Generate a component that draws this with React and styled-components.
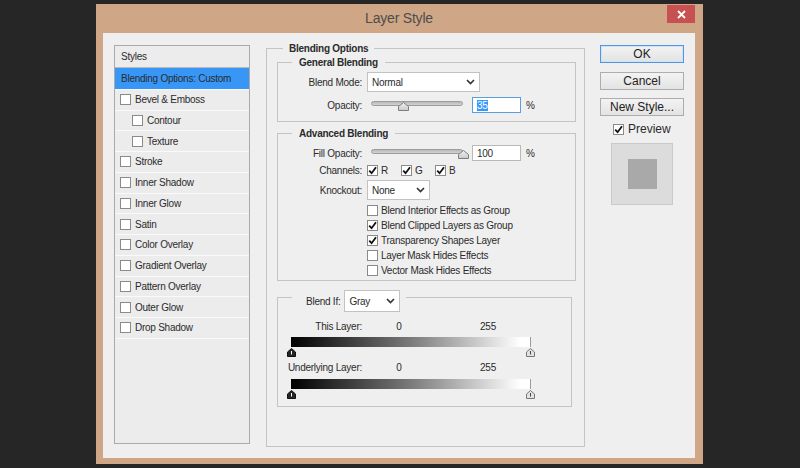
import styled, { createGlobalStyle } from 'styled-components'

const styleItems = [
  { id: 1, name: 'Bevel & Emboss' },
  { id: 2, name: 'Contour', indent: true },
  { id: 3, name: 'Texture', indent: true },
  { id: 4, name: 'Stroke' },
  { id: 5, name: 'Inner Shadow' },
  { id: 6, name: 'Inner Glow' },
  { id: 7, name: 'Satin' },
  { id: 8, name: 'Color Overlay' },
  { id: 9, name: 'Gradient Overlay' },
  { id: 10, name: 'Pattern Overlay' },
  { id: 11, name: 'Outer Glow' },
  { id: 12, name: 'Drop Shadow' },
]

const advancedChecks = [
  { name: 'Blend Interior Effects as Group', checked: false },
  { name: 'Blend Clipped Layers as Group', checked: true },
  { name: 'Transparency Shapes Layer', checked: true },
  { name: 'Layer Mask Hides Effects', checked: false },
  { name: 'Vector Mask Hides Effects', checked: false },
]

const GlobalStyle = createGlobalStyle`
  html, body {
    margin: 0;
    padding: 0;
    background: #262626;
  }
  body {
    font-family: 'Liberation Sans', Arial, sans-serif;
    font-size: 10px;
    letter-spacing: -0.25px;
    color: #2b2b2b;
  }
  * {
    box-sizing: border-box;
  }
`

const Window = styled.div`
  width: 607px;
  height: 460px;
  margin: 4px 0 0 96px;
  background: #cfa786;
  display: flex;
  flex-direction: column;
  padding: 0 8px 6px 7px;
`

const TitleBar = styled.div`
  height: 29px;
  display: grid;
  grid-template-columns: 1fr auto 1fr;
  align-items: center;
`

const Title = styled.div`
  grid-column: 2;
  font-size: 14px;
  letter-spacing: -0.2px;
  color: #4d4d4d;
  padding-bottom: 1px;
`

const CloseButton = styled.div`
  justify-self: end;
  align-self: start;
  margin-top: 1px;
  width: 28px;
  height: 18px;
  background: #c75050;
  display: flex;
  align-items: center;
  justify-content: center;
`

const Client = styled.div`
  flex: 1;
  background: #efefef;
  display: flex;
  align-items: flex-start;
  padding: 12px 11px 0;
`

const StylesPanel = styled.div`
  width: 136px;
  height: 399px;
  border: 1px solid #aaaaaa;
  background: #ececec;
`

const StylesHeader = styled.div`
  height: 22px;
  border-bottom: 1px solid #b9b9b9;
  padding-left: 6px;
  display: flex;
  align-items: center;
`

const StyleRow = styled.div`
  height: ${({ $active }) => ($active ? 21.75 : 20.75)}px;
  border-bottom: 1px solid #fafafa;
  display: flex;
  align-items: center;
  gap: 4px;
  padding-left: ${({ $indent, $active }) => ($active ? 6 : $indent ? 17 : 5)}px;
  background: ${({ $active }) => ($active ? '#3897f6' : 'transparent')};
  white-space: nowrap;
`

const Box = styled.span`
  flex: none;
  width: 11px;
  height: 11px;
  border: 1px solid #8a8a8a;
  background: #ffffff;
  display: flex;
  align-items: center;
  justify-content: center;
`

const OptionsGroup = styled.fieldset`
  flex: none;
  width: 319px;
  height: 405px;
  margin: -3px 0 0 16px;
  padding: 1px 8px 0 10px;
  border: 1px solid #c4c4c4;
  min-width: 0;
`

const GroupLegend = styled.legend`
  margin-left: 6px;
  padding: 0 6px;
  font-weight: bold;
  line-height: 13px;
`

const Section = styled.fieldset`
  margin: ${({ $top }) => $top}px ${({ $right }) => $right || 0}px 0 0;
  padding: ${({ $padTop }) => $padTop}px 0 ${({ $padBottom }) => $padBottom}px 0;
  border: 1px solid #c4c4c4;
  min-width: 0;
`

const SectionLegend = styled.legend`
  margin-left: 14px;
  padding: 0 7px;
  font-weight: bold;
  line-height: 13px;
`

const BlendIfLegend = styled.legend`
  margin-left: 14px;
  padding: 8px 6px 0 14px;
`

const LegendInner = styled.span`
  display: flex;
  align-items: center;
  gap: 4px;
`

const FieldRow = styled.div`
  display: grid;
  grid-template-columns: 84px auto;
  column-gap: 5px;
  align-items: center;
  margin-top: ${({ $top }) => $top || 0}px;
  height: ${({ $height }) => $height}px;
`

const Label = styled.span`
  text-align: right;
  white-space: nowrap;
`

const SelectBox = styled.div`
  width: ${({ $width }) => $width}px;
  height: ${({ $height }) => $height || 20}px;
  background: #ffffff;
  border: 1px solid #c2c2c2;
  display: flex;
  align-items: center;
  justify-content: space-between;
  padding: 0 4px 0 4px;
`

const Controls = styled.div`
  display: flex;
  align-items: center;
`

const Slider = styled.div`
  position: relative;
  width: 96px;
  height: 16px;
  padding: 4px 0 0 4px;
`

const Track = styled.div`
  width: 92px;
  height: 5px;
  border: 1px solid #9c9c9c;
  border-radius: 3px;
  background: linear-gradient(#b9b9b9, #d2d2d2);
`

const Thumb = styled.svg`
  position: absolute;
  top: 5px;
`

const NumberField = styled.div`
  width: 49px;
  height: 16px;
  margin-left: 9px;
  background: #ffffff;
  border: 1px solid ${({ $focused }) => ($focused ? '#5a9de0' : '#b9b9b9')};
  padding-left: 4px;
  display: flex;
  align-items: center;
`

const Selected = styled.span`
  background: #3399ff;
  color: #ffffff;
`

const Percent = styled.span`
  margin-left: 5px;
`

const Channels = styled.div`
  display: flex;
`

const ChannelItem = styled.label`
  width: 34px;
  display: flex;
  align-items: center;
  gap: 3px;
`

const CheckList = styled.div`
  margin-top: 3px;
  padding-left: 89px;
`

const CheckRow = styled.label`
  height: 15px;
  display: flex;
  align-items: center;
  gap: 3px;
  white-space: nowrap;
`

const ValueRow = styled.div`
  display: grid;
  grid-template-columns: 84px 64px 104px;
  column-gap: 5px;
  align-items: center;
  height: 13px;
  margin-top: ${({ $top }) => $top}px;
`

const Value = styled.span`
  text-align: center;
`

const GradientBar = styled.div`
  width: 240px;
  height: 10px;
  margin: ${({ $top }) => $top}px 0 0 13px;
  background: linear-gradient(to right, #000000, #7a7a7a 50%, #ffffff 96%);
  border-right: 1px solid #9a9a9a;
`

const Pointers = styled.div`
  width: 248px;
  height: 9px;
  margin: 1px 0 0 9px;
  display: flex;
  justify-content: space-between;
`

const ButtonColumn = styled.div`
  width: 84px;
  margin-left: 15px;
  display: flex;
  flex-direction: column;
`

const Button = styled.div`
  height: 18px;
  margin-bottom: 8.5px;
  border: 1px solid ${({ $primary }) => ($primary ? '#4f97e3' : '#adadad')};
  box-shadow: ${({ $primary }) => ($primary ? 'inset 0 0 0 1px #cfe3f8' : 'none')};
  background: linear-gradient(#f3f3f3, #e3e3e3);
  font-size: 12px;
  letter-spacing: 0;
  color: #222222;
  display: flex;
  align-items: center;
  justify-content: center;
`

const PreviewToggle = styled.label`
  height: 13px;
  margin-top: -2px;
  padding-left: 13px;
  display: flex;
  align-items: center;
  gap: 4px;
  font-size: 12px;
  letter-spacing: 0;
`

const Swatch = styled.div`
  width: 62px;
  height: 62px;
  margin: 7px 0 0 11px;
  background: #dcdcdc;
  border: 1px solid #c9c9c9;
  display: flex;
  align-items: center;
  justify-content: center;
`

const SwatchInner = styled.div`
  width: 29px;
  height: 30px;
  background: #a9a9a9;
`

const Check = ({ checked }) => (
  <Box>
    {checked && (
      <svg width="9" height="9" viewBox="0 0 9 9">
        <path d="M1.2 4.6 L3.6 7.2 L8 1.2" fill="none" stroke="#111" strokeWidth="1.8" />
      </svg>
    )}
  </Box>
)

const Chevron = () => (
  <svg width="9" height="6" viewBox="0 0 9 6">
    <polyline points="1,1 4.5,4.6 8,1" fill="none" stroke="#333" strokeWidth="1.6" />
  </svg>
)

const Select = ({ value, width, height }) => (
  <SelectBox $width={width} $height={height}>
    <span>{value}</span>
    <Chevron />
  </SelectBox>
)

const OpacitySlider = ({ value }) => (
  <Slider>
    <Track />
    <Thumb width="11" height="9" viewBox="0 0 11 9" style={{ left: 4 + (value / 100) * 92 - 5.5 }}>
      <defs>
        <linearGradient id="thumbFill" x1="0" y1="0" x2="0" y2="1">
          <stop offset="0" stopColor="#f2f2f2" />
          <stop offset="1" stopColor="#c9c9c9" />
        </linearGradient>
      </defs>
      <path d="M5.5 0.5 L10.5 4.5 V8.5 H0.5 V4.5 Z" fill="url(#thumbFill)" stroke="#7d7d7d" />
    </Thumb>
  </Slider>
)

const Pointer = ({ dark }) => (
  <svg width="9" height="9" viewBox="0 0 9 9">
    <path
      d="M4.5 0.5 L8.5 4 V8.5 H0.5 V4 Z"
      fill={dark ? '#262626' : '#e2e2e2'}
      stroke={dark ? '#111' : '#777'}
    />
    <line x1="4.5" y1="3" x2="4.5" y2="6.5" stroke={dark ? '#fff' : '#444'} strokeWidth="1" />
  </svg>
)

const LayerRange = ({ label, top, barTop }) => (
  <>
    <ValueRow $top={top}>
      <Label>{label}</Label>
      <Value>0</Value>
      <Value>255</Value>
    </ValueRow>
    <GradientBar $top={barTop} />
    <Pointers>
      <Pointer dark />
      <Pointer />
    </Pointers>
  </>
)

const App = () => {
  return (
    <>
      <GlobalStyle />
      <Window>
        <TitleBar>
          <Title>Layer Style</Title>
          <CloseButton>
            <svg width="9" height="9" viewBox="0 0 9 9">
              <path d="M1 1 L8 8 M8 1 L1 8" stroke="#fff" strokeWidth="1.8" />
            </svg>
          </CloseButton>
        </TitleBar>
        <Client>
          <StylesPanel>
            <StylesHeader>Styles</StylesHeader>
            <StyleRow $active>Blending Options: Custom</StyleRow>
            {styleItems.map(item => (
              <StyleRow key={item.id} $indent={item.indent}>
                <Check />
                {item.name}
              </StyleRow>
            ))}
          </StylesPanel>

          <OptionsGroup>
            <GroupLegend>Blending Options</GroupLegend>

            <Section $top={0} $padTop={3} $padBottom={8}>
              <SectionLegend>General Blending</SectionLegend>
              <FieldRow $height={20}>
                <Label>Blend Mode:</Label>
                <Select value="Normal" width={113} />
              </FieldRow>
              <FieldRow $top={5} $height={16}>
                <Label>Opacity:</Label>
                <Controls>
                  <OpacitySlider value={35} />
                  <NumberField $focused>
                    <Selected>35</Selected>
                  </NumberField>
                  <Percent>%</Percent>
                </Controls>
              </FieldRow>
            </Section>

            <Section $top={5} $padTop={5} $padBottom={2}>
              <SectionLegend>Advanced Blending</SectionLegend>
              <FieldRow $height={16}>
                <Label>Fill Opacity:</Label>
                <Controls>
                  <OpacitySlider value={100} />
                  <NumberField>100</NumberField>
                  <Percent>%</Percent>
                </Controls>
              </FieldRow>
              <FieldRow $top={3} $height={13}>
                <Label>Channels:</Label>
                <Channels>
                  {['R', 'G', 'B'].map(ch => (
                    <ChannelItem key={ch}>
                      <Check checked />
                      {ch}
                    </ChannelItem>
                  ))}
                </Channels>
              </FieldRow>
              <FieldRow $top={3} $height={20}>
                <Label>Knockout:</Label>
                <Select value="None" width={63} />
              </FieldRow>
              <CheckList>
                {advancedChecks.map(item => (
                  <CheckRow key={item.name}>
                    <Check checked={item.checked} />
                    {item.name}
                  </CheckRow>
                ))}
              </CheckList>
            </Section>

            <Section $top={1} $right={4} $padTop={0} $padBottom={7}>
              <BlendIfLegend>
                <LegendInner>
                  Blend If:
                  <Select value="Gray" width={56} height={22} />
                </LegendInner>
              </BlendIfLegend>
              <LayerRange label="This Layer:" top={8} barTop={4} />
              <LayerRange label="Underlying Layer:" top={4} barTop={5} />
            </Section>
          </OptionsGroup>

          <ButtonColumn>
            <Button $primary>OK</Button>
            <Button>Cancel</Button>
            <Button>New Style...</Button>
            <PreviewToggle>
              <Check checked />
              Preview
            </PreviewToggle>
            <Swatch>
              <SwatchInner />
            </Swatch>
          </ButtonColumn>
        </Client>
      </Window>
    </>
  )
}

export default App
